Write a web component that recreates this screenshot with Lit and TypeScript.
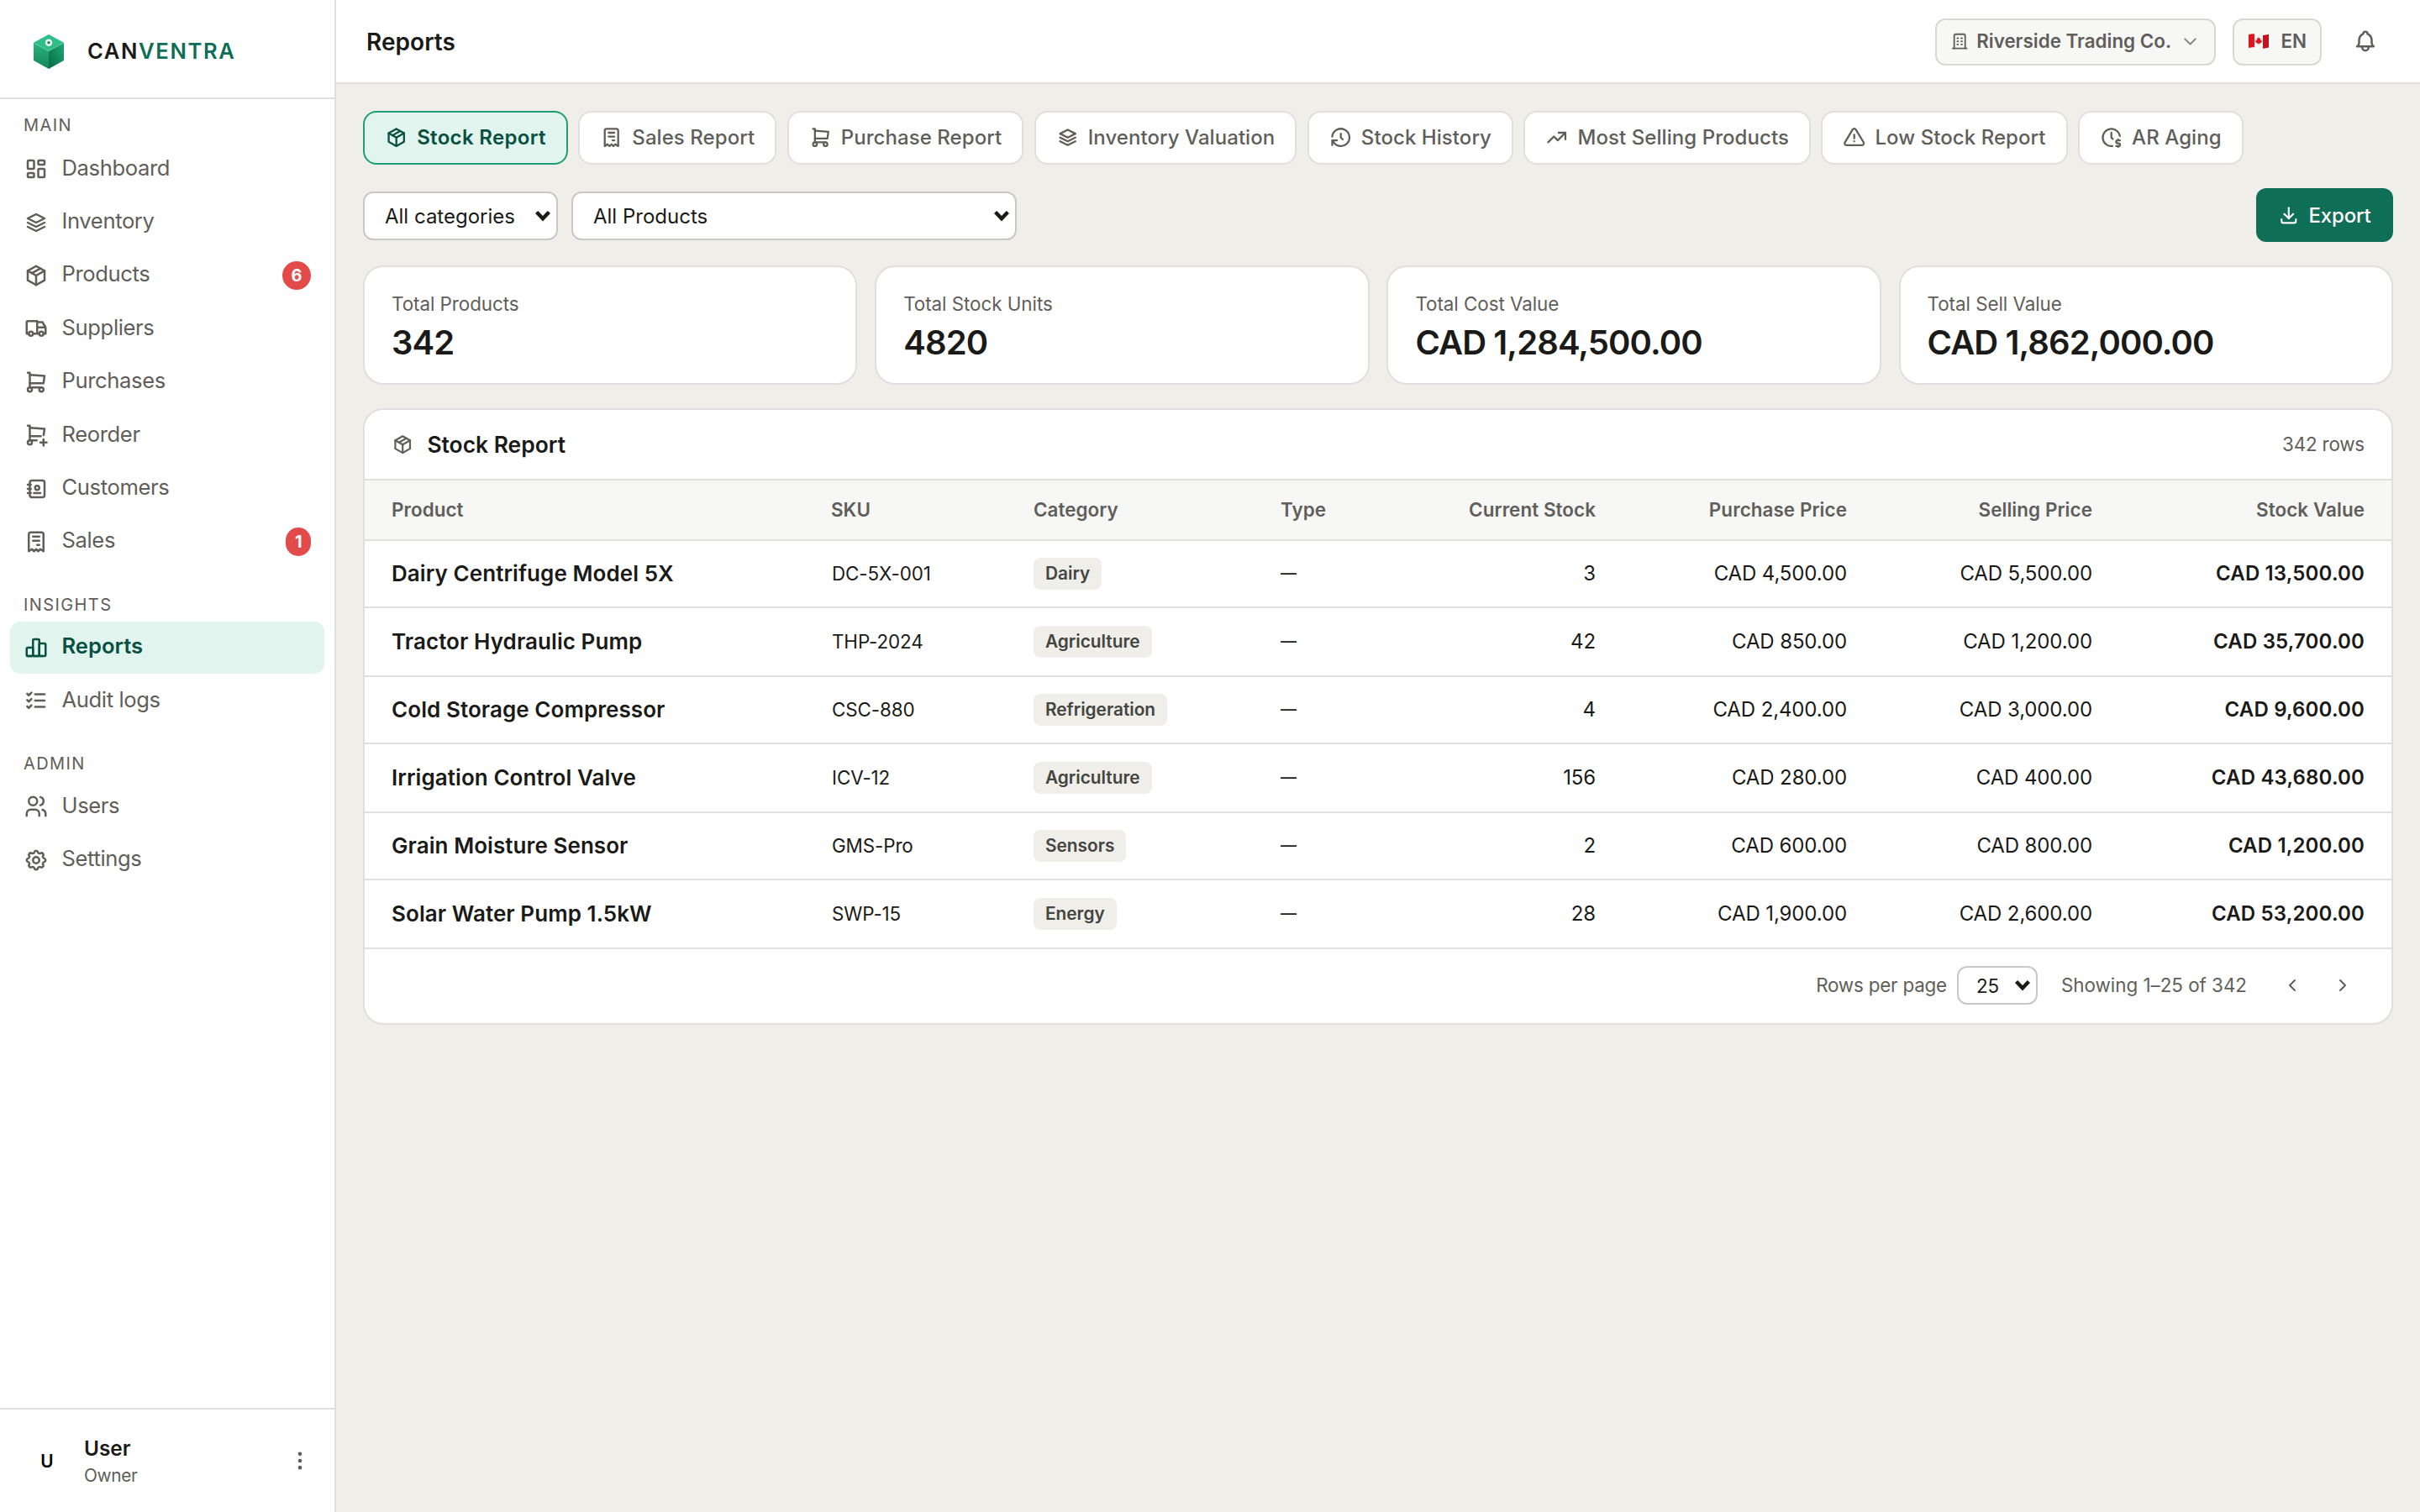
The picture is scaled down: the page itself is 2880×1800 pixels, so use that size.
import { LitElement, html, css, svg, CSSResult, TemplateResult, SVGTemplateResult } from 'lit';
import { customElement, property, state } from 'lit/decorators.js';
import { classMap } from 'lit/directives/class-map.js';

const ICONS: Record<string, string[]> = {
  dashboard: [
    'M5 4h4a1 1 0 0 1 1 1v6a1 1 0 0 1 -1 1h-4a1 1 0 0 1 -1 -1v-6a1 1 0 0 1 1 -1',
    'M5 16h4a1 1 0 0 1 1 1v2a1 1 0 0 1 -1 1h-4a1 1 0 0 1 -1 -1v-2a1 1 0 0 1 1 -1',
    'M15 12h4a1 1 0 0 1 1 1v6a1 1 0 0 1 -1 1h-4a1 1 0 0 1 -1 -1v-6a1 1 0 0 1 1 -1',
    'M15 4h4a1 1 0 0 1 1 1v2a1 1 0 0 1 -1 1h-4a1 1 0 0 1 -1 -1v-2a1 1 0 0 1 1 -1',
  ],
  stack: ['M12 4l-8 4l8 4l8 -4l-8 -4', 'M4 12l8 4l8 -4', 'M4 16l8 4l8 -4'],
  package: [
    'M12 3l8 4.5l0 9l-8 4.5l-8 -4.5l0 -9l8 -4.5',
    'M12 12l8 -4.5',
    'M12 12l0 9',
    'M12 12l-8 -4.5',
    'M16 5.25l-8 4.5',
  ],
  truck: [
    'M5 17a2 2 0 1 0 4 0a2 2 0 1 0 -4 0',
    'M15 17a2 2 0 1 0 4 0a2 2 0 1 0 -4 0',
    'M5 17h-2v-11a1 1 0 0 1 1 -1h9v12m-4 0h6m4 0h2v-6h-8m0 -5h5l3 5',
  ],
  cart: [
    'M4 19a2 2 0 1 0 4 0a2 2 0 1 0 -4 0',
    'M15 19a2 2 0 1 0 4 0a2 2 0 1 0 -4 0',
    'M17 17h-11v-14h-2',
    'M6 5l14 1l-1 7h-13',
  ],
  cartPlus: [
    'M4 19a2 2 0 1 0 4 0a2 2 0 0 0 -4 0',
    'M12.5 17h-6.5v-14h-2',
    'M6 5l14 1l-.86 6.017m-2.64 .983h-10.5',
    'M16 19h6',
    'M19 16v6',
  ],
  addressBook: [
    'M20 6v12a2 2 0 0 1 -2 2h-10a2 2 0 0 1 -2 -2v-12a2 2 0 0 1 2 -2h10a2 2 0 0 1 2 2z',
    'M10 16h6',
    'M11 11a2 2 0 1 0 4 0a2 2 0 1 0 -4 0',
    'M4 8h3',
    'M4 12h3',
    'M4 16h3',
  ],
  receipt: [
    'M5 21v-16a2 2 0 0 1 2 -2h10a2 2 0 0 1 2 2v16l-3 -2l-2 2l-2 -2l-2 2l-2 -2l-3 2m4 -14h6m-6 4h6m-2 4h2',
  ],
  chart: [
    'M3 13a1 1 0 0 1 1 -1h4a1 1 0 0 1 1 1v6a1 1 0 0 1 -1 1h-4a1 1 0 0 1 -1 -1z',
    'M15 9a1 1 0 0 1 1 -1h4a1 1 0 0 1 1 1v10a1 1 0 0 1 -1 1h-4a1 1 0 0 1 -1 -1z',
    'M9 5a1 1 0 0 1 1 -1h4a1 1 0 0 1 1 1v14a1 1 0 0 1 -1 1h-4a1 1 0 0 1 -1 -1z',
    'M4 20h14',
  ],
  listCheck: [
    'M3.5 5.5l1.5 1.5l2.5 -2.5',
    'M3.5 11.5l1.5 1.5l2.5 -2.5',
    'M3.5 17.5l1.5 1.5l2.5 -2.5',
    'M11 6l9 0',
    'M11 12l9 0',
    'M11 18l9 0',
  ],
  users: [
    'M5 7a4 4 0 1 0 8 0a4 4 0 1 0 -8 0',
    'M3 21v-2a4 4 0 0 1 4 -4h4a4 4 0 0 1 4 4v2',
    'M16 3.13a4 4 0 0 1 0 7.75',
    'M21 21v-2a4 4 0 0 0 -3 -3.85',
  ],
  settings: [
    'M10.325 4.317c.426 -1.756 2.924 -1.756 3.35 0a1.724 1.724 0 0 0 2.573 1.066c1.543 -.94 3.31 .826 2.37 2.37a1.724 1.724 0 0 0 1.065 2.572c1.756 .426 1.756 2.924 0 3.35a1.724 1.724 0 0 0 -1.066 2.573c.94 1.543 -.826 3.31 -2.37 2.37a1.724 1.724 0 0 0 -2.572 1.065c-.426 1.756 -2.924 1.756 -3.35 0a1.724 1.724 0 0 0 -2.573 -1.066c-1.543 .94 -3.31 -.826 -2.37 -2.37a1.724 1.724 0 0 0 -1.065 -2.572c-1.756 -.426 -1.756 -2.924 0 -3.35a1.724 1.724 0 0 0 1.066 -2.573c-.94 -1.543 .826 -3.31 2.37 -2.37c1 .608 2.296 .07 2.572 -1.065',
    'M9 12a3 3 0 1 0 6 0a3 3 0 0 0 -6 0',
  ],
  history: ['M12 8l0 4l2 2', 'M3.05 11a9 9 0 1 1 .5 4m-.5 5v-5h5'],
  trending: ['M3 17l6 -6l4 4l8 -8', 'M14 7l7 0l0 7'],
  alert: [
    'M12 9v4',
    'M10.363 3.591l-8.106 13.534a1.914 1.914 0 0 0 1.636 2.871h16.214a1.914 1.914 0 0 0 1.636 -2.87l-8.106 -13.536a1.914 1.914 0 0 0 -3.274 0',
    'M12 16h.01',
  ],
  clockDollar: [
    'M20.866 10.45a9 9 0 1 0 -7.815 10.488',
    'M12 7v5l1.5 1.5',
    'M21 15h-2.5a1.5 1.5 0 0 0 0 3h1a1.5 1.5 0 0 1 0 3h-2.5',
    'M19 21v1m0 -8v1',
  ],
  download: ['M4 17v2a2 2 0 0 0 2 2h12a2 2 0 0 0 2 -2v-2', 'M7 11l5 5l5 -5', 'M12 4l0 12'],
  building: [
    'M3 21l18 0',
    'M9 8l1 0',
    'M9 12l1 0',
    'M9 16l1 0',
    'M14 8l1 0',
    'M14 12l1 0',
    'M14 16l1 0',
    'M5 21v-16a2 2 0 0 1 2 -2h10a2 2 0 0 1 2 2v16',
  ],
  bell: [
    'M10 5a2 2 0 1 1 4 0a7 7 0 0 1 4 6v3a4 4 0 0 0 2 3h-16a4 4 0 0 0 2 -3v-3a7 7 0 0 1 4 -6',
    'M9 17v1a3 3 0 0 0 6 0v-1',
  ],
  chevronDown: ['M6 9l6 6l6 -6'],
  chevronLeft: ['M15 6l-6 6l6 6'],
  chevronRight: ['M9 6l6 6l-6 6'],
  dots: [
    'M11 12a1 1 0 1 0 2 0a1 1 0 1 0 -2 0',
    'M11 19a1 1 0 1 0 2 0a1 1 0 1 0 -2 0',
    'M11 5a1 1 0 1 0 2 0a1 1 0 1 0 -2 0',
  ],
};

interface NavItem {
  label: string;
  icon: string;
  badge?: number;
}

interface NavGroup {
  title: string;
  items: NavItem[];
}

interface StockRow {
  name: string;
  sku: string;
  category: string;
  stock: number;
  purchase: number;
  selling: number;
  value: number;
}

const NAV: NavGroup[] = [
  {
    title: 'MAIN',
    items: [
      { label: 'Dashboard', icon: 'dashboard' },
      { label: 'Inventory', icon: 'stack' },
      { label: 'Products', icon: 'package', badge: 6 },
      { label: 'Suppliers', icon: 'truck' },
      { label: 'Purchases', icon: 'cart' },
      { label: 'Reorder', icon: 'cartPlus' },
      { label: 'Customers', icon: 'addressBook' },
      { label: 'Sales', icon: 'receipt', badge: 1 },
    ],
  },
  {
    title: 'INSIGHTS',
    items: [
      { label: 'Reports', icon: 'chart' },
      { label: 'Audit logs', icon: 'listCheck' },
    ],
  },
  {
    title: 'ADMIN',
    items: [
      { label: 'Users', icon: 'users' },
      { label: 'Settings', icon: 'settings' },
    ],
  },
];

const TABS: NavItem[] = [
  { label: 'Stock Report', icon: 'package' },
  { label: 'Sales Report', icon: 'receipt' },
  { label: 'Purchase Report', icon: 'cart' },
  { label: 'Inventory Valuation', icon: 'stack' },
  { label: 'Stock History', icon: 'history' },
  { label: 'Most Selling Products', icon: 'trending' },
  { label: 'Low Stock Report', icon: 'alert' },
  { label: 'AR Aging', icon: 'clockDollar' },
];

const ROWS: StockRow[] = [
  { name: 'Dairy Centrifuge Model 5X', sku: 'DC-5X-001', category: 'Dairy', stock: 3, purchase: 4500, selling: 5500, value: 13500 },
  { name: 'Tractor Hydraulic Pump', sku: 'THP-2024', category: 'Agriculture', stock: 42, purchase: 850, selling: 1200, value: 35700 },
  { name: 'Cold Storage Compressor', sku: 'CSC-880', category: 'Refrigeration', stock: 4, purchase: 2400, selling: 3000, value: 9600 },
  { name: 'Irrigation Control Valve', sku: 'ICV-12', category: 'Agriculture', stock: 156, purchase: 280, selling: 400, value: 43680 },
  { name: 'Grain Moisture Sensor', sku: 'GMS-Pro', category: 'Sensors', stock: 2, purchase: 600, selling: 800, value: 1200 },
  { name: 'Solar Water Pump 1.5kW', sku: 'SWP-15', category: 'Energy', stock: 28, purchase: 1900, selling: 2600, value: 53200 },
];

const cad = (amount: number): string =>
  `CAD ${amount.toLocaleString('en-US', { minimumFractionDigits: 2, maximumFractionDigits: 2 })}`;

@customElement('ui-icon')
export class UiIcon extends LitElement {
  @property({ type: String }) name: string = '';

  static get styles(): CSSResult {
    return css`
      :host {
        display: block;
        flex: none;
        width: 1em;
        height: 1em;
      }

      svg {
        display: block;
        width: 100%;
        height: 100%;
        fill: none;
        stroke: currentColor;
        stroke-width: 2;
        stroke-linecap: round;
        stroke-linejoin: round;
      }
    `;
  }

  render(): TemplateResult {
    const paths: SVGTemplateResult[] = (ICONS[this.name] ?? []).map((d) => svg`<path d=${d}></path>`);
    return html`<svg viewBox="0 0 24 24">${paths}</svg>`;
  }
}

@customElement('ui-select')
export class UiSelect extends LitElement {
  @property({ type: String }) value: string = '';

  static get styles(): CSSResult {
    return css`
      :host {
        box-sizing: border-box;
        display: flex;
        align-items: center;
        justify-content: space-between;
        border: 2px solid #c8c8c6;
        border-radius: 12px;
        background: #fff;
        color: #1a1a18;
        white-space: nowrap;
      }

      svg {
        display: block;
        flex: none;
        width: 20px;
        height: 14px;
        fill: none;
        stroke: currentColor;
        stroke-width: 4.4;
      }
    `;
  }

  render(): TemplateResult {
    return html`
      <span>${this.value}</span>
      <svg viewBox="0 0 20 14"><path d="M2.6 2.4L10 10.2L17.4 2.4"></path></svg>
    `;
  }
}

@customElement('app-sidebar')
export class AppSidebar extends LitElement {
  @property({ type: String }) active: string = '';

  static get styles(): CSSResult {
    return css`
      :host {
        box-sizing: border-box;
        display: flex;
        flex-direction: column;
        width: 400px;
        height: 100%;
        border-right: 2px solid #dfdfdd;
        background: #fff;
        color: #5f5e5a;
      }

      .brand {
        box-sizing: border-box;
        display: flex;
        align-items: center;
        gap: 28px;
        height: 118px;
        padding: 6px 0 0 40px;
        border-bottom: 2px solid #dfdfdd;
      }

      .logo {
        display: block;
        width: 36px;
        height: 41px;
      }

      .wordmark {
        padding-bottom: 1px;
        color: #1a1a18;
        font-size: 25.6px;
        font-weight: 600;
        letter-spacing: 1.6px;
      }

      .wordmark em {
        color: #0f6e56;
        font-style: normal;
      }

      nav {
        flex: 1;
      }

      .title {
        height: 24px;
        padding: 19px 28px 9.4px;
        font-size: 20px;
        line-height: 24px;
        letter-spacing: 1.4px;
      }

      .group + .group .title {
        padding-top: 30px;
        padding-bottom: 8.6px;
      }

      .item {
        box-sizing: border-box;
        display: flex;
        align-items: center;
        gap: 15.5px;
        height: 61.8px;
        margin: 0 12px 1.6px;
        padding: 0 16px;
        border-radius: 12px;
        font-size: 25.6px;
        letter-spacing: -0.38px;
      }

      .item ui-icon {
        font-size: 30px;
      }

      .item .label {
        flex: 1;
        padding-bottom: 4.4px;
      }

      .item.active {
        background: #e1f5ee;
        color: #085041;
        font-weight: 600;
        letter-spacing: 0;
      }

      .badge {
        box-sizing: border-box;
        height: 34px;
        padding: 0 10.5px;
        border-radius: 17px;
        background: #e24b4a;
        color: #fff;
        font-size: 20px;
        font-weight: 700;
        letter-spacing: 0;
        line-height: 34px;
      }

      .account {
        box-sizing: border-box;
        display: flex;
        align-items: center;
        height: 124px;
        padding: 0 28px;
        border-top: 2px solid #dfdfdd;
      }

      .avatar {
        width: 56px;
        color: #000;
        font-size: 20.8px;
        font-weight: 600;
        text-align: center;
      }

      .who {
        flex: 1;
        padding: 2px 0 0 16px;
      }

      .name {
        color: #1a1a18;
        font-size: 24.4px;
        font-weight: 600;
        line-height: 34px;
      }

      .role {
        font-size: 20.8px;
        letter-spacing: -0.35px;
        line-height: 32px;
      }

      .account ui-icon {
        margin-right: -1px;
        font-size: 28px;
      }
    `;
  }

  private _renderItem(item: NavItem): TemplateResult {
    return html`
      <div class=${classMap({ item: true, active: item.label === this.active })}>
        <ui-icon name=${item.icon}></ui-icon>
        <span class="label">${item.label}</span>
        ${item.badge ? html`<span class="badge">${item.badge}</span>` : ''}
      </div>
    `;
  }

  render(): TemplateResult {
    return html`
      <div class="brand">
        <svg class="logo" viewBox="0 0 36 41">
          <defs>
            <linearGradient id="left" x1="0" y1="0" x2="0" y2="1">
              <stop offset="0" stop-color="#2cb581"></stop>
              <stop offset="1" stop-color="#128458"></stop>
            </linearGradient>
            <linearGradient id="right" x1="1" y1="0" x2="0" y2="1">
              <stop offset="0" stop-color="#1fa874"></stop>
              <stop offset="1" stop-color="#066b43"></stop>
            </linearGradient>
          </defs>
          <path d="M18 0L36 9.8L18 19.8L0 9.8Z" fill="#2fbd88"></path>
          <path d="M0 9.8L18 19.8V41L0 31Z" fill="url(#left)"></path>
          <path d="M36 9.8L18 19.8V41L36 31Z" fill="url(#right)"></path>
          <path d="M0 9.8L18 19.8L36 9.8" fill="none" stroke="#6fdab1" stroke-width="0.6"></path>
          <circle cx="18" cy="9.8" r="3" fill="#178a60" stroke="#f4fffa" stroke-width="2.4"></circle>
        </svg>
        <span class="wordmark">CAN<em>VENTRA</em></span>
      </div>
      <nav>
        ${NAV.map(
          (group) => html`
            <div class="group">
              <div class="title">${group.title}</div>
              ${group.items.map((item) => this._renderItem(item))}
            </div>
          `
        )}
      </nav>
      <div class="account">
        <div class="avatar">U</div>
        <div class="who">
          <div class="name">User</div>
          <div class="role">Owner</div>
        </div>
        <ui-icon name="dots"></ui-icon>
      </div>
    `;
  }
}

@customElement('app-topbar')
export class AppTopbar extends LitElement {
  @property({ type: String }) heading: string = '';

  static get styles(): CSSResult {
    return css`
      :host {
        box-sizing: border-box;
        display: flex;
        align-items: center;
        height: 100px;
        padding: 2px 49.6px 0 36px;
        border-bottom: 2px solid #dfdfdd;
        background: #fff;
        color: #5f5e5a;
      }

      h1 {
        flex: 1;
        margin: 0;
        color: #1a1a18;
        font-size: 28px;
        font-weight: 600;
        letter-spacing: 0.05px;
      }

      .pill {
        box-sizing: border-box;
        display: flex;
        align-items: center;
        height: 56px;
        margin-right: 20px;
        border: 2px solid #d8d8d5;
        border-radius: 12px;
        background: #f7f7f5;
        font-size: 22.4px;
        font-weight: 600;
      }

      .pill span {
        padding-bottom: 4px;
      }

      .company {
        gap: 8.4px;
        width: 334px;
        padding-left: 16px;
      }

      .company ui-icon {
        margin-bottom: 2px;
        font-size: 22.4px;
      }

      .company .chevron {
        margin-left: 2px;
        font-size: 25px;
        opacity: 0.75;
      }

      .lang {
        gap: 14px;
        width: 106px;
        padding-left: 17px;
      }

      .flag {
        display: block;
        width: 24px;
        height: 18px;
        margin-bottom: 3px;
      }

      .bell {
        margin: 0 0 2px 17px;
        font-size: 30px;
      }
    `;
  }

  render(): TemplateResult {
    return html`
      <h1>${this.heading}</h1>
      <div class="pill company">
        <ui-icon name="building"></ui-icon>
        <span>Riverside Trading Co.</span>
        <ui-icon class="chevron" name="chevronDown"></ui-icon>
      </div>
      <div class="pill lang">
        <svg class="flag" viewBox="0 0 24 18">
          <path d="M0 1.2Q6 -0.6 12 1.4T24 0.8V16.6Q18 18.6 12 16.8T0 17Z" fill="#f4f4f4"></path>
          <path d="M0 1.2Q3.4 0 7 0.4V16.2Q3.4 16 0 17Z" fill="#e0161f"></path>
          <path d="M17 1.9Q20.6 2 24 0.8V16.6Q20.6 17.8 17 17.7Z" fill="#c8101a"></path>
          <path
            d="M12 4L13.1 6L14.2 5.5L13.9 8L15.6 7.6L15.3 8.8L16.2 9.6L13.4 11.8L12.3 11.7V13.4H11.7V11.7L10.6 11.8L7.8 9.6L8.7 8.8L8.4 7.6L10.1 8L9.8 5.5L10.9 6Z"
            fill="#dd141d"
          ></path>
        </svg>
        <span>EN</span>
      </div>
      <ui-icon class="bell" name="bell"></ui-icon>
    `;
  }
}

@customElement('stock-table')
export class StockTable extends LitElement {
  @property({ attribute: false }) rows: StockRow[] = [];
  @property({ type: Number }) total: number = 0;
  @property({ type: Number }) pageSize: number = 25;

  static get styles(): CSSResult {
    return css`
      :host {
        display: block;
        overflow: hidden;
        border: 2px solid #dfdfdd;
        border-radius: 24px;
        background: #fff;
        color: #1a1a18;
      }

      .head {
        display: flex;
        align-items: center;
        height: 82px;
        padding: 0 32px;
        border-bottom: 2px solid #dfdfdd;
      }

      .head ui-icon {
        color: #5f5e5a;
        font-size: 26.4px;
      }

      .head h2 {
        flex: 1;
        margin: 0 0 0 16px;
        font-size: 26.4px;
        font-weight: 600;
      }

      .muted {
        padding-bottom: 1px;
        color: #5f5e5a;
        font-size: 22.4px;
        letter-spacing: -0.2px;
      }

      .muted.range {
        letter-spacing: -0.02px;
      }

      .row {
        box-sizing: border-box;
        display: grid;
        grid-template-columns: 523px 241px 294px 116px 259px 299px 292px 324px;
        align-items: center;
        height: 80px;
        padding: 0 32px 2px;
        border-bottom: 2px solid #dfdfdd;
        font-size: 24px;
      }

      .row.even {
        height: 82px;
      }

      .row.labels {
        height: 72px;
        background: #f7f7f5;
        color: #5f5e5a;
        font-size: 22.4px;
        font-weight: 600;
        letter-spacing: 0.06px;
      }

      .num {
        letter-spacing: -0.12px;
        text-align: right;
      }

      .labels .num {
        letter-spacing: 0.08px;
      }

      .name {
        font-size: 26px;
        font-weight: 600;
        letter-spacing: 0.07px;
      }

      .sku {
        padding-left: 1px;
        font-size: 22.4px;
        letter-spacing: -0.1px;
      }

      .category {
        padding-top: 2px;
      }

      .dash {
        font-size: 19px;
        font-weight: 500;
      }

      .strong {
        font-weight: 600;
        letter-spacing: 0.15px;
      }

      .chip {
        display: inline-block;
        height: 38px;
        padding: 0 14px;
        border-radius: 8px;
        background: #efeee9;
        color: #444441;
        font-size: 20.8px;
        font-weight: 600;
        line-height: 38px;
      }

      .foot {
        display: flex;
        align-items: center;
        justify-content: flex-end;
        height: 86px;
        padding: 0 46px 2px 32px;
      }

      .foot ui-select {
        width: 96px;
        height: 46px;
        margin: 0 28px 0 12px;
        padding: 0 6px 0 21px;
        font-size: 22.4px;
      }

      .foot ui-icon {
        margin-left: 36px;
        color: #5f5e5a;
        font-size: 24px;
      }

      .foot ui-icon:first-of-type {
        margin-left: 42px;
      }
    `;
  }

  private _renderRow(row: StockRow, index: number): TemplateResult {
    return html`
      <div class=${classMap({ row: true, even: index % 2 === 1 })}>
        <span class="name">${row.name}</span>
        <span class="sku">${row.sku}</span>
        <span class="category"><span class="chip">${row.category}</span></span>
        <span class="dash">—</span>
        <span class="num">${row.stock}</span>
        <span class="num">${cad(row.purchase)}</span>
        <span class="num">${cad(row.selling)}</span>
        <span class="num strong">${cad(row.value)}</span>
      </div>
    `;
  }

  render(): TemplateResult {
    return html`
      <div class="head">
        <ui-icon name="package"></ui-icon>
        <h2>Stock Report</h2>
        <span class="muted">${this.total} rows</span>
      </div>
      <div class="row labels">
        <span>Product</span>
        <span>SKU</span>
        <span>Category</span>
        <span>Type</span>
        <span class="num">Current Stock</span>
        <span class="num">Purchase Price</span>
        <span class="num">Selling Price</span>
        <span class="num">Stock Value</span>
      </div>
      ${this.rows.map((row, index) => this._renderRow(row, index))}
      <div class="foot">
        <span class="muted">Rows per page</span>
        <ui-select value=${this.pageSize}></ui-select>
        <span class="muted range">Showing 1–${this.pageSize} of ${this.total}</span>
        <ui-icon name="chevronLeft"></ui-icon>
        <ui-icon name="chevronRight"></ui-icon>
      </div>
    `;
  }
}

@customElement('app-root')
export class AppRoot extends LitElement {
  @state() private _tab: string = 'Stock Report';

  static get styles(): CSSResult {
    return css`
      :host {
        display: grid;
        grid-template-columns: 400px 1fr;
        height: 100vh;
        overflow: hidden;
        background: #efeee9;
        color: #1a1a18;
        font-family: Inter, 'Liberation Sans', sans-serif;
      }

      .content {
        display: flex;
        flex-direction: column;
        gap: 28px;
        padding: 32px;
      }

      .tabs {
        display: flex;
        gap: 12.4px;
      }

      .tab {
        box-sizing: border-box;
        display: flex;
        align-items: center;
        gap: 10.8px;
        height: 64px;
        padding: 0 24px;
        border: 2px solid #dfdfdd;
        border-radius: 16px;
        background: #fff;
        color: #5f5e5a;
        font-size: 24px;
        font-weight: 500;
        letter-spacing: 0.06px;
        white-space: nowrap;
      }

      .tab span {
        padding-bottom: 1px;
      }

      .tab ui-icon {
        font-size: 27.4px;
      }

      .tab.active {
        border-color: #1d9e75;
        background: #e1f5ee;
        color: #085041;
        font-weight: 600;
        letter-spacing: 0.32px;
      }

      .filters {
        display: flex;
        align-items: center;
        gap: 16px;
      }

      .filters ui-select {
        height: 58px;
        margin-top: 2px;
        padding: 0 6px 0 24px;
        font-size: 24px;
      }

      .category {
        width: 232px;
      }

      .product {
        width: 530px;
      }

      .export {
        box-sizing: border-box;
        display: flex;
        align-items: center;
        gap: 10.4px;
        height: 64px;
        margin-left: auto;
        padding: 0 26.4px;
        border-radius: 12px;
        background: #0f6e56;
        color: #fff;
        font-size: 24px;
        font-weight: 500;
        letter-spacing: -0.15px;
      }

      .export ui-icon {
        font-size: 25.6px;
      }

      .stats {
        display: grid;
        grid-template-columns: repeat(4, 1fr);
        gap: 20.8px;
      }

      .stat {
        box-sizing: border-box;
        height: 142px;
        padding: 30px 32px 0;
        border: 2px solid #dfdfdd;
        border-radius: 24px;
        background: #fff;
      }

      .stat .label {
        color: #5f5e5a;
        font-size: 22.4px;
        letter-spacing: -0.05px;
        line-height: 28px;
      }

      .stat .value {
        margin-top: 8px;
        font-size: 40px;
        font-weight: 600;
        letter-spacing: -0.9px;
        line-height: 48px;
      }
    `;
  }

  private _renderStat(label: string, value: string): TemplateResult {
    return html`
      <div class="stat">
        <div class="label">${label}</div>
        <div class="value">${value}</div>
      </div>
    `;
  }

  render(): TemplateResult {
    return html`
      <app-sidebar active="Reports"></app-sidebar>
      <main>
        <app-topbar heading="Reports"></app-topbar>
        <div class="content">
          <div class="tabs">
            ${TABS.map(
              (tab) => html`
                <div
                  class=${classMap({ tab: true, active: tab.label === this._tab })}
                  @click=${() => (this._tab = tab.label)}
                >
                  <ui-icon name=${tab.icon}></ui-icon>
                  <span>${tab.label}</span>
                </div>
              `
            )}
          </div>
          <div class="filters">
            <ui-select class="category" value="All categories"></ui-select>
            <ui-select class="product" value="All Products"></ui-select>
            <div class="export">
              <ui-icon name="download"></ui-icon>
              <span>Export</span>
            </div>
          </div>
          <div class="stats">
            ${this._renderStat('Total Products', '342')}
            ${this._renderStat('Total Stock Units', '4820')}
            ${this._renderStat('Total Cost Value', cad(1284500))}
            ${this._renderStat('Total Sell Value', cad(1862000))}
          </div>
          <stock-table .rows=${ROWS} .total=${342}></stock-table>
        </div>
      </main>
    `;
  }
}
